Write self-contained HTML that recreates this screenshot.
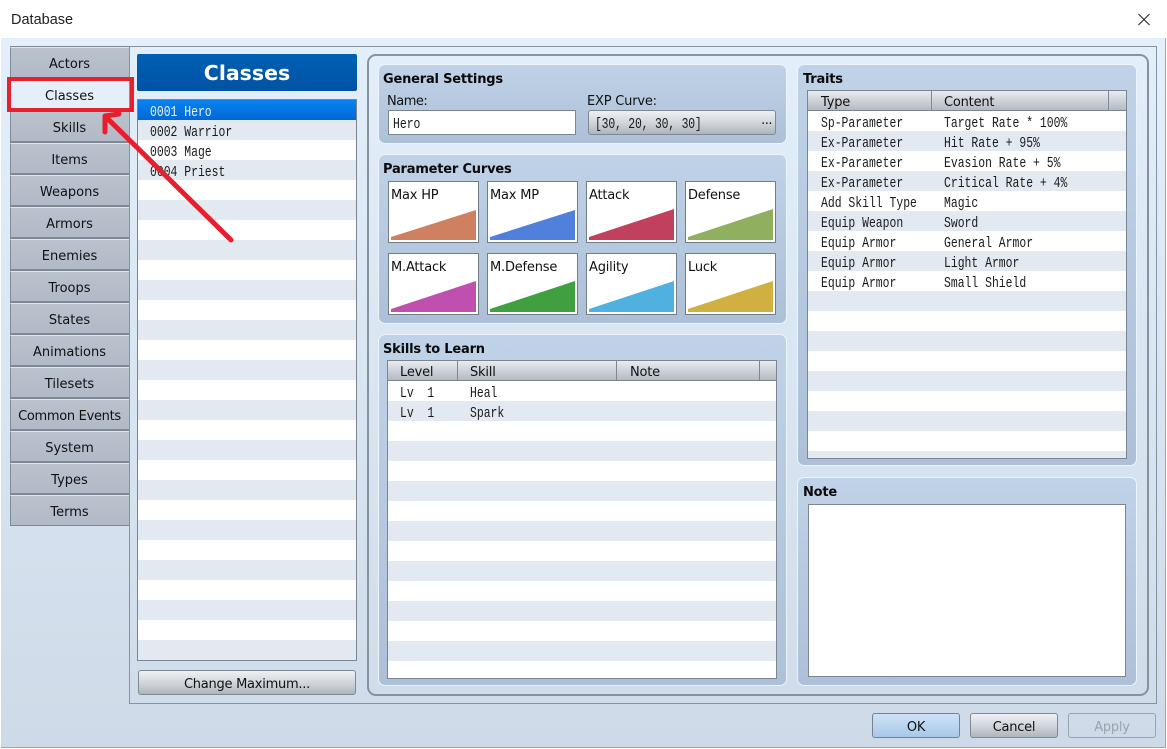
<!DOCTYPE html>
<html><head><meta charset="utf-8"><style>
html,body{margin:0;padding:0;background:#fff}
#w{position:relative;width:1167px;height:749px;overflow:hidden;background:#fff;font-family:"DejaVu Sans","Liberation Sans",sans-serif;font-size:13px;color:#111}
#w div{position:absolute;box-sizing:border-box}
#w span{position:absolute;white-space:nowrap}
.p{letter-spacing:-.2px}
.m{font-family:"Liberation Mono",monospace;font-size:15px;transform:scaleX(.761);transform-origin:0 0;line-height:20px;color:#1a1a1a;white-space:pre !important}
.tab{left:10px;width:119px;height:31px;background:linear-gradient(#b9c2cd,#b1bac6);border:1px solid #7d8894;border-right:0;border-top-color:#dfe5ec;border-left-color:#808b97;text-align:center;line-height:33px;box-shadow:0 -1px 0 #7d8894;padding-right:1px}
.grp{background:linear-gradient(#bfd2e8,#adc0d7);border:1px solid #eef4fb;border-radius:7px}
.gt{font-weight:bold;font-size:13px;line-height:16px;color:#0a0a0a;letter-spacing:-.2px}
.btn{background:linear-gradient(#eef1f4,#cfd4d9 55%,#aeb4bb);border:1px solid #7e8994;border-radius:3px;text-align:center;line-height:27px;letter-spacing:-.25px}
.cv{width:91px;height:62px;background:#fff;border:1px solid #737d88}
.cv span{left:2px;top:5px;line-height:18px}
.tb{background:repeating-linear-gradient(#fff 0 20px,#e3e9f0 20px 40px);border:1px solid #7b8590}
.hd{background:linear-gradient(#e8ecf0,#b4bac1);border-bottom:1px solid #7b8590;left:0;top:0;right:0;height:20px}
.sep{top:0;width:1px;height:19px;background:#7f8994}
</style></head><body><div id="w">
<span style="left:11px;top:12px;font-family:'Liberation Sans',sans-serif;font-size:14.5px;line-height:17px;color:#222">Database</span>
<svg style="position:absolute;left:1137px;top:13px" width="14" height="14"><path d="M1.5 1L12.5 12M12.5 1L1.5 12" stroke="#222" stroke-width="1" fill="none"/></svg>

<div style="left:1px;top:38px;width:1165px;height:710px;background:linear-gradient(#e4effc,#cedae7);border-right:1px solid #7fc46f;border-bottom:1px solid #7fc46f"></div>

<div style="left:129px;top:46px;width:1028px;height:658px;border:1px solid #87929e;background:linear-gradient(#e3eefb,#d0dce9)"></div>
<div style="left:10px;top:46px;width:120px;height:1px;background:#87929e"></div>

<div class="tab" style="top:47px">Actors</div>
<div class="tab" style="top:79px;background:#e4effb">Classes</div>
<div class="tab" style="top:111px">Skills</div>
<div class="tab" style="top:143px">Items</div>
<div class="tab" style="top:175px">Weapons</div>
<div class="tab" style="top:207px">Armors</div>
<div class="tab" style="top:239px">Enemies</div>
<div class="tab" style="top:271px">Troops</div>
<div class="tab" style="top:303px">States</div>
<div class="tab" style="top:335px">Animations</div>
<div class="tab" style="top:367px">Tilesets</div>
<div class="tab" style="top:399px;letter-spacing:-.3px">Common Events</div>
<div class="tab" style="top:431px">System</div>
<div class="tab" style="top:463px">Types</div>
<div class="tab" style="top:495px">Terms</div>

<div style="left:137px;top:54px;width:220px;height:37px;background:linear-gradient(#0060b4,#0052a4);border-radius:2px;color:#fff;text-align:center;font-weight:bold;font-size:20.5px;line-height:38px">Classes</div>

<div class="tb" style="left:137px;top:99px;width:220px;height:562px">
<div style="left:0;top:0;right:0;height:20px;background:linear-gradient(#0a82f2,#0068d4)"></div>
<span class="m" style="left:12px;top:3px;color:#e8f3ff">0001 Hero</span>
<span class="m" style="left:12px;top:23px">0002 Warrior</span>
<span class="m" style="left:12px;top:43px">0003 Mage</span>
<span class="m" style="left:12px;top:63px">0004 Priest</span>
</div>
<div class="btn" style="left:138px;top:670px;width:218px;height:25px">Change Maximum...</div>

<div style="left:367px;top:54px;width:782px;height:642px;border:2px solid #87929e;border-radius:9px"></div>

<div class="grp" style="left:378px;top:64px;width:409px;height:80px"></div>
<span class="gt" style="left:383px;top:72px">General Settings</span>
<span class="p" style="left:387px;top:94px;line-height:16px;letter-spacing:-.5px">Name:</span>
<span class="p" style="left:587px;top:94px;line-height:16px">EXP Curve:</span>
<div style="left:388px;top:110px;width:188px;height:25px;background:#fff;border:1px solid #7b8590"><span class="m" style="left:4px;top:4px">Hero</span></div>
<div class="btn" style="left:588px;top:110px;width:188px;height:25px"><span class="m" style="left:6px;top:4px">[30, 20, 30, 30]</span><span style="right:3px;top:6px;line-height:16px;font-size:13px;letter-spacing:-.5px">···</span></div>

<div class="grp" style="left:378px;top:154px;width:409px;height:170px"></div>
<span class="gt" style="left:383px;top:162px">Parameter Curves</span>
<div class="cv" style="left:388px;top:181px"><span class="p">Max HP</span><svg style="position:absolute;left:2px;top:2px" width="86" height="58"><polygon points="0,56 0,53 85,26 85,56" fill="#cf8060"/></svg></div>
<div class="cv" style="left:487px;top:181px"><span class="p">Max MP</span><svg style="position:absolute;left:2px;top:2px" width="86" height="58"><polygon points="0,56 0,53 85,26 85,56" fill="#5080dc"/></svg></div>
<div class="cv" style="left:586px;top:181px"><span class="p">Attack</span><svg style="position:absolute;left:2px;top:2px" width="86" height="58"><polygon points="0,56 0,53 85,25 85,56" fill="#c0405e"/></svg></div>
<div class="cv" style="left:685px;top:181px"><span class="p">Defense</span><svg style="position:absolute;left:2px;top:2px" width="86" height="58"><polygon points="0,56 0,53 85,25 85,56" fill="#90b060"/></svg></div>
<div class="cv" style="left:388px;top:253px"><span class="p">M.Attack</span><svg style="position:absolute;left:2px;top:2px" width="86" height="58"><polygon points="0,56 0,53 85,25 85,56" fill="#c050b0"/></svg></div>
<div class="cv" style="left:487px;top:253px"><span class="p">M.Defense</span><svg style="position:absolute;left:2px;top:2px" width="86" height="58"><polygon points="0,56 0,53 85,25 85,56" fill="#40a040"/></svg></div>
<div class="cv" style="left:586px;top:253px"><span class="p">Agility</span><svg style="position:absolute;left:2px;top:2px" width="86" height="58"><polygon points="0,56 0,53 85,25 85,56" fill="#50b0e0"/></svg></div>
<div class="cv" style="left:685px;top:253px"><span class="p">Luck</span><svg style="position:absolute;left:2px;top:2px" width="86" height="58"><polygon points="0,56 0,53 85,25 85,56" fill="#d0b040"/></svg></div>

<div class="grp" style="left:378px;top:334px;width:409px;height:352px"></div>
<span class="gt" style="left:383px;top:342px">Skills to Learn</span>
<div class="tb" style="left:387px;top:360px;width:390px;height:319px;background-position:0 20px">
<div class="hd"><div class="sep" style="left:69px"></div><div class="sep" style="left:228px"></div><div class="sep" style="left:371px"></div>
<span class="p" style="left:12px;top:4px;line-height:16px">Level</span><span class="p" style="left:82px;top:4px;line-height:16px">Skill</span><span class="p" style="left:242px;top:4px;line-height:16px">Note</span></div>
<span class="m" style="left:12px;top:23px">Lv  1</span><span class="m" style="left:82px;top:23px">Heal</span>
<span class="m" style="left:12px;top:43px">Lv  1</span><span class="m" style="left:82px;top:43px">Spark</span>
</div>

<div class="grp" style="left:797px;top:64px;width:340px;height:402px"></div>
<span class="gt" style="left:803px;top:72px">Traits</span>
<div class="tb" style="left:807px;top:90px;width:320px;height:369px;background-position:0 20px">
<div class="hd"><div class="sep" style="left:123px"></div><div class="sep" style="left:300px"></div>
<span class="p" style="left:13px;top:4px;line-height:16px">Type</span><span class="p" style="left:136px;top:4px;line-height:16px">Content</span></div>
<span class="m" style="left:13px;top:23px">Sp-Parameter</span><span class="m" style="left:136px;top:23px">Target Rate * 100%</span>
<span class="m" style="left:13px;top:43px">Ex-Parameter</span><span class="m" style="left:136px;top:43px">Hit Rate + 95%</span>
<span class="m" style="left:13px;top:63px">Ex-Parameter</span><span class="m" style="left:136px;top:63px">Evasion Rate + 5%</span>
<span class="m" style="left:13px;top:83px">Ex-Parameter</span><span class="m" style="left:136px;top:83px">Critical Rate + 4%</span>
<span class="m" style="left:13px;top:103px">Add Skill Type</span><span class="m" style="left:136px;top:103px">Magic</span>
<span class="m" style="left:13px;top:123px">Equip Weapon</span><span class="m" style="left:136px;top:123px">Sword</span>
<span class="m" style="left:13px;top:143px">Equip Armor</span><span class="m" style="left:136px;top:143px">General Armor</span>
<span class="m" style="left:13px;top:163px">Equip Armor</span><span class="m" style="left:136px;top:163px">Light Armor</span>
<span class="m" style="left:13px;top:183px">Equip Armor</span><span class="m" style="left:136px;top:183px">Small Shield</span>
</div>

<div class="grp" style="left:797px;top:477px;width:340px;height:209px"></div>
<span class="gt" style="left:803px;top:485px">Note</span>
<div style="left:808px;top:504px;width:318px;height:173px;background:#fff;border:1px solid #7b8590"></div>

<div class="btn" style="left:872px;top:713px;width:88px;height:25px;background:linear-gradient(#cfe2f5,#a8c8ea);border-color:#76838f">OK</div>
<div class="btn" style="left:970px;top:713px;width:88px;height:25px">Cancel</div>
<div class="btn" style="left:1068px;top:713px;width:88px;height:25px;background:transparent;border-color:#98a3ae;color:#98a3ae">Apply</div>

<div style="left:7px;top:77px;width:127px;height:35px;border:4px solid #e8202e"></div>
<svg style="position:absolute;left:95px;top:105px" width="150" height="145"><path d="M136 135L11 12M10 11L24 9M10 11L10 27" stroke="#e81e2d" stroke-width="5" fill="none" stroke-linecap="round"/></svg>
</div></body></html>
